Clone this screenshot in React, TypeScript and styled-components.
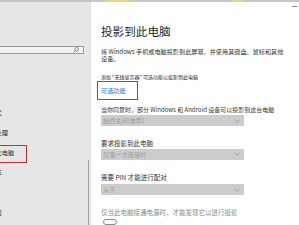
import styled, { createGlobalStyle } from "styled-components";

const GlobalStyle = createGlobalStyle`
    html, body {
        margin: 0;
        padding: 0;
        background: #ffffff;
        overflow: hidden;
    }
    * {
        box-sizing: border-box;
    }
`;

const navItems = [
    "电池",
    "存储",
    "平板模式",
    "多任务处理",
    "投影到此电脑",
    "体验共享",
    "剪贴板",
    "远程桌面",
    "关于",
];

const App = () => {
    return (
        <>
            <GlobalStyle />
            <Page>
                <TopStrip />
                <Body>
                    <Sidebar>
                        <NavColumn>
                            <SearchBox>
                                <SearchIcon width="6" height="6" viewBox="0 0 12 12">
                                    <circle cx="7.2" cy="4.8" r="3.6" fill="none" stroke="#555" strokeWidth="1.3" />
                                    <line x1="4.6" y1="7.4" x2="1" y2="11" stroke="#555" strokeWidth="1.4" />
                                </SearchIcon>
                            </SearchBox>
                            <NavList>
                                {navItems.map((item) => (
                                    <NavItem key={item} $active={item === "投影到此电脑"}>
                                        {item}
                                    </NavItem>
                                ))}
                            </NavList>
                        </NavColumn>
                        <ScrollTrack>
                            <ScrollThumb />
                        </ScrollTrack>
                    </Sidebar>
                    <Main>
                        <TitleBar>
                            <Minimize />
                        </TitleBar>
                        <Title>投影到此电脑</Title>
                        <Text $mt={10} $maxWidth={184}>
                            将 Windows 手机或电脑投影到此屏幕，并使用其键盘、鼠标和其他设备。
                        </Text>
                        <Text $mt={11} $size={5} $strong>
                            添加 "无线显示器" 可选功能以投影到此电脑
                        </Text>
                        <LinkWrap>
                            <Link href="#">可选功能</Link>
                        </LinkWrap>
                        <Text $mt={12} $size={6}>
                            当你同意时，部分 Windows 和 Android 设备可以投影到这台电脑
                        </Text>
                        <Select $mt={2}>
                            <span>始终关闭(推荐)</span>
                            <Chevron />
                        </Select>
                        <Text $mt={13.5} $size={6.5}>
                            要求投影到此电脑
                        </Text>
                        <Select $mt={2}>
                            <span>仅第一次连接时</span>
                            <Chevron />
                        </Select>
                        <Text $mt={14} $size={6.5}>
                            需要 PIN 才能进行配对
                        </Text>
                        <Select $mt={3.5}>
                            <span>从不</span>
                            <Chevron />
                        </Select>
                        <Text $mt={14.5} $size={6.5} $muted>
                            仅当此电脑接通电源时，才能发现它以进行投影
                        </Text>
                        <Toggle />
                    </Main>
                </Body>
            </Page>
        </>
    );
};

export default App;

const Chevron = () => (
    <ChevronSvg width="6" height="4" viewBox="0 0 12 8">
        <polyline points="1,1.5 6,6.5 11,1.5" fill="none" stroke="#8f8f8f" strokeWidth="1.4" />
    </ChevronSvg>
);

const Page = styled.div`
    display: flex;
    flex-direction: column;
    width: 299px;
    height: 225px;
    overflow: hidden;
    font-family: "Noto Sans CJK SC", "Noto Sans", sans-serif;
`;

const TopStrip = styled.div`
    height: 2px;
    flex-shrink: 0;
    background: linear-gradient(
        90deg,
        #c6c6c6 0,
        #c6c6c6 100px,
        #e8d98a 112px,
        #ead67a 125px,
        #c6c6c6 135px,
        #c6c6c6 228px,
        #e6d88c 238px,
        #c6c6c6 248px,
        #c6c6c6 100%
    );
`;

const Body = styled.div`
    display: flex;
    flex: 1;
    min-height: 0;
`;

const Sidebar = styled.div`
    display: flex;
    width: 91px;
    flex-shrink: 0;
    background-color: #e6e6e6;
    overflow: hidden;
`;

const NavColumn = styled.div`
    display: flex;
    flex-direction: column;
    flex: 1;
    margin-left: -30px;
    padding-top: 44px;
`;

const SearchBox = styled.div`
    display: flex;
    align-items: center;
    justify-content: flex-end;
    width: 114px;
    height: 12px;
    padding-right: 4px;
    background-color: #f3f3f3;
    border: 1px solid #9a9a9a;
`;

const SearchIcon = styled.svg`
    display: block;
`;

const NavList = styled.div`
    display: flex;
    flex-direction: column;
    margin-top: 9px;
`;

const NavItem = styled.div<{ $active?: boolean }>`
    position: relative;
    height: 20px;
    line-height: 20px;
    padding-left: 7px;
    font-size: 6.2px;
    color: #2b2b2b;
    white-space: nowrap;
    &::after {
        content: "";
        display: ${(p) => (p.$active ? "block" : "none")};
        position: absolute;
        left: 0;
        top: 2px;
        width: 55px;
        height: 16px;
        border: 1.5px solid #d42a30;
    }
`;

const ScrollTrack = styled.div`
    display: flex;
    flex-direction: column;
    width: 4px;
    padding-left: 1px;
`;

const ScrollThumb = styled.div`
    width: 1px;
    flex: 1;
    margin-top: 158px;
    background-color: #a3a3a3;
`;

const Main = styled.div`
    display: flex;
    flex-direction: column;
    align-items: flex-start;
    flex: 1;
    padding-left: 10px;
    background-color: #ffffff;
`;

const TitleBar = styled.div`
    display: flex;
    align-self: stretch;
    align-items: center;
    justify-content: flex-end;
    height: 11px;
`;

const Minimize = styled.div`
    width: 5px;
    height: 1px;
    margin-right: 2px;
    background-color: #8a8a8a;
`;

const Title = styled.h1`
    margin: 13px 0 0;
    font-size: 11.6px;
    line-height: 14px;
    font-weight: 400;
    color: #1f1f1f;
`;

const Text = styled.p<{
    $mt?: number;
    $maxWidth?: number;
    $size?: number;
    $muted?: boolean;
    $strong?: boolean;
}>`
    margin: ${(p) => p.$mt || 0}px 0 0;
    max-width: ${(p) => (p.$maxWidth ? `${p.$maxWidth}px` : "none")};
    font-size: ${(p) => p.$size || 6.15}px;
    line-height: 7px;
    color: ${(p) => (p.$muted ? "#8a8a8a" : p.$strong ? "#1a1a1a" : "#333333")};
    white-space: ${(p) => (p.$maxWidth ? "normal" : "nowrap")};
`;

const LinkWrap = styled.div`
    position: relative;
    margin-top: 3.5px;
    line-height: 7px;
    &::after {
        content: "";
        position: absolute;
        left: -4px;
        right: -12px;
        top: -2px;
        bottom: -6px;
        border: 1.5px solid #d42a30;
    }
`;

const Link = styled.a`
    font-size: 6.15px;
    color: #2b6fc2;
    text-decoration: none;
`;

const Select = styled.div<{ $mt?: number }>`
    display: flex;
    align-items: center;
    justify-content: space-between;
    width: 143px;
    height: 13.5px;
    margin-top: ${(p) => p.$mt || 0}px;
    padding: 0 4px 0 2px;
    background-color: #cccccc;
    font-size: 6.15px;
    color: #9c9c9c;
`;

const ChevronSvg = styled.svg`
    display: block;
`;

const Toggle = styled.div`
    width: 14px;
    height: 7px;
    margin-top: 2.5px;
    margin-left: 2px;
    border: 1px solid #8a8a8a;
    border-radius: 4px;
`;
